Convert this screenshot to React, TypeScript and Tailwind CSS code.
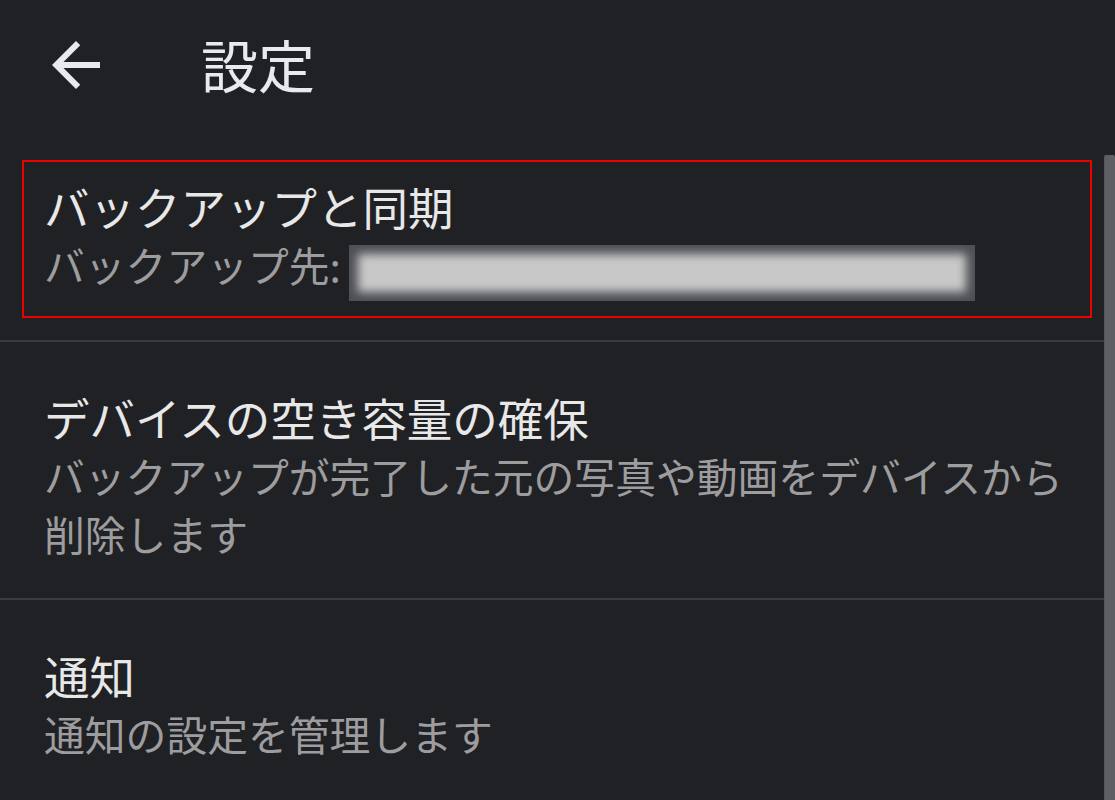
import React from "react";

const FONT = '"Noto Sans CJK JP", "Noto Sans", sans-serif';

function Row({
  title,
  children,
  className = "",
}: {
  title: string;
  children: React.ReactNode;
  className?: string;
}) {
  return (
    <div className={className}>
      <div className="text-[45.5px] leading-[60px] text-[#e8e8e8] whitespace-nowrap">{title}</div>
      <div className="text-[40.8px] leading-[58px] text-[#9d9d9f]">{children}</div>
    </div>
  );
}

export default function App() {
  return (
    <div
      className="w-[1115px] h-[800px] bg-[#202124] overflow-hidden flex flex-col"
      style={{ fontFamily: FONT }}
    >
      {/* header */}
      <div className="h-[134px] pb-[5px] flex items-center shrink-0">
        <div className="ml-[40px] w-[72px] h-[72px] flex items-center justify-center">
          <svg width="72" height="72" viewBox="0 0 24 24" fill="#e8eaed">
            <path d="M20 11H7.83l5.59-5.59L12 4l-8 8 8 8 1.41-1.41L7.83 13H20v-2z" />
          </svg>
        </div>
        <div className="ml-[89px] -mt-[3px] text-[57px] leading-[60px] text-[#e8eaed]">設定</div>
      </div>

      <div className="flex flex-1 min-h-0">
        {/* list */}
        <div className="flex-1 flex flex-col">
          <div className="pt-[26px] pb-[22px] pl-[22px] pr-[12px]">
            <div className="border-2 border-[#ee0000] pt-[14px] pb-[22px] pl-[20px]">
              <div className="text-[45.5px] leading-[60px] text-[#e8e8e8] whitespace-nowrap">
                バックアップと同期
              </div>
              <div className="flex items-start h-[58px] text-[40.8px] leading-[58px] text-[#9d9d9f] whitespace-nowrap">
                <span>バックアップ先:</span>
                <div className="ml-[8px] mt-[9px] w-[626px] h-[56px] bg-[#4f5055] overflow-hidden relative">
                  <div className="absolute left-[9px] right-[9px] top-[9px] bottom-[9px] bg-[#c8c8c8] blur-[5px]" />
                </div>
              </div>
            </div>
          </div>
          <div className="h-[2px] bg-[#3a3b3e]" />
          <Row title="デバイスの空き容量の確保" className="pt-[45px] pb-[35px] pl-[44px]">
            バックアップが完了した元の写真や動画をデバイスから
            <br />
            削除します
          </Row>
          <div className="h-[2px] bg-[#3a3b3e]" />
          <Row title="通知" className="pt-[45px] pl-[44px]">
            通知の設定を管理します
          </Row>
        </div>
        {/* scrollbar */}
        <div className="w-[11px] mt-[21px] bg-[#5e5f63] rounded-t-[2px] border-l border-[#55565a]" />
      </div>
    </div>
  );
}
